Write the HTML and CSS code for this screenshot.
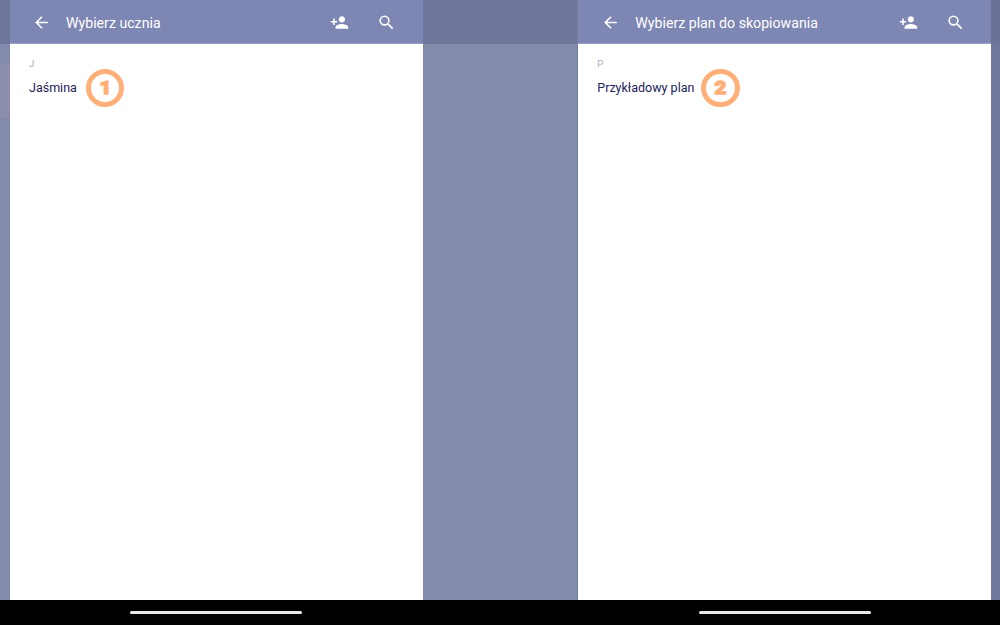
FILE: index.html
```html
<!DOCTYPE html>
<html lang="pl">
<head>
<meta charset="utf-8">
<title>Wybierz ucznia</title>
<link rel="stylesheet" href="styles.css">
</head>
<body>
<div class="screens">
  <div class="backdrop backdrop-left"><div class="backdrop-item"></div></div>
  <section class="panel">
    <header class="bar">
      <svg class="icon back" viewBox="0 0 24 24"><path d="M20 11H7.83l5.59-5.59L12 4l-8 8 8 8 1.41-1.41L7.83 13H20z"/></svg>
      <h1 class="title">Wybierz ucznia</h1>
      <svg class="icon add" viewBox="0 0 24 24"><path d="M15 12c2.21 0 4-1.79 4-4s-1.790-4-4-4-4 1.790-4 4 1.790 4 4 4zm-9-2V7H4v3H1v2h3v3h2v-3h3v-2zm9 4c-2.670 0-8 1.340-8 4v2h16v-2c0-2.660-5.330-4-8-4z"/></svg>
      <svg class="icon search" viewBox="0 0 24 24"><path d="M15.500 14h-.790l-.280-.270A6.470 6.470 0 0 0 16 9.500 6.500 6.500 0 1 0 9.500 16c1.610 0 3.090-.590 4.230-1.570l.270.280v.790l5 4.990L20.490 19zm-6 0a4.500 4.500 0 1 1 0-9 4.500 4.500 0 0 1 0 9z"/></svg>
    </header>
    <main class="list">
      <div class="letter">J</div>
      <div class="row"><span class="name name-short">Jaśmina</span><span class="step"><span class="digit digit-one">1</span></span></div>
    </main>
  </section>
  <div class="backdrop backdrop-middle"></div>
  <section class="panel panel-plans">
    <header class="bar">
      <svg class="icon back" viewBox="0 0 24 24"><path d="M20 11H7.83l5.59-5.59L12 4l-8 8 8 8 1.41-1.41L7.83 13H20z"/></svg>
      <h1 class="title">Wybierz plan do skopiowania</h1>
      <svg class="icon add" viewBox="0 0 24 24"><path d="M15 12c2.21 0 4-1.79 4-4s-1.790-4-4-4-4 1.790-4 4 1.790 4 4 4zm-9-2V7H4v3H1v2h3v3h2v-3h3v-2zm9 4c-2.670 0-8 1.340-8 4v2h16v-2c0-2.660-5.330-4-8-4z"/></svg>
      <svg class="icon search" viewBox="0 0 24 24"><path d="M15.500 14h-.790l-.280-.270A6.470 6.470 0 0 0 16 9.500 6.500 6.500 0 1 0 9.500 16c1.610 0 3.090-.590 4.230-1.570l.270.280v.790l5 4.990L20.490 19zm-6 0a4.500 4.500 0 1 1 0-9 4.500 4.500 0 0 1 0 9z"/></svg>
    </header>
    <main class="list">
      <div class="letter">P</div>
      <div class="row"><span class="name name-long">Przykładowy plan</span><span class="step"><span class="digit">2</span></span></div>
    </main>
  </section>
  <div class="backdrop backdrop-right"></div>
</div>
<footer class="navigation"><span class="handle"></span><span class="handle"></span></footer>
</body>
</html>
```
FILE: styles.css
```css
* { box-sizing: border-box; }
body {
  margin: 0;
  width: 1000px;
  height: 625px;
  overflow: hidden;
  display: flex;
  flex-direction: column;
  background: #000;
  font-family: Roboto, sans-serif;
}
.screens {
  display: grid;
  grid-template-columns: 10px 412.7px 155.6px 412.4px 9.3px;
  height: 600.3px;
  flex: none;
}
.backdrop {
  background: linear-gradient(#6f769c 44px, #848aac 44px);
}
.backdrop-left { padding-top: 63px; }
.backdrop-item { height: 55px; background: #8b8fad; }
.backdrop-middle { border-right: 1px solid #757ca4; }
.backdrop-right { background: linear-gradient(#6b7296 44px, #70779c 44px); }
.panel { background: #fff; min-width: 0; }
.bar {
  display: flex;
  align-items: center;
  height: 44px;
  padding: 0 27px 0 21.500px;
  border-bottom: 1px solid #9aa1c4;
  background: #7e86b3;
  color: #fff;
}
.icon { width: 19px; height: 19px; flex: none; margin-top: 1px; fill: #fff; }
.panel-plans .bar { padding: 0 26px 0 22.500px; }
.title {
  flex: 1;
  margin: 2px 0 0 15.500px;
  font-size: 14.150px;
  line-height: 20px;
  font-weight: 400;
  white-space: nowrap;
}
.add { margin-right: 27.500px; }
.list { padding: 14px 0 0 19px; }
.letter { font-size: 9.500px; line-height: 12px; color: #a5adc8; }
.row { display: flex; align-items: center; height: 36px; }
.name {
  font-size: 12.500px;
  line-height: 18px;
  color: #1b2358;
  white-space: nowrap;
}
.name-short { width: 56.500px; }
.name-long { width: 104.200px; }
.step {
  display: flex;
  align-items: center;
  justify-content: center;
  width: 38.500px;
  height: 38.500px;
  border: 5px solid #ffb078;
  border-radius: 50%;
  color: #ffb078;
}
.digit {
  font-size: 18.500px;
  line-height: 20px;
  font-weight: 900;
  -webkit-text-stroke: 1.400px #ffb078;
  transform: scaleX(1.1);
}
.digit-one { margin-left: 1px; }
.navigation {
  display: grid;
  grid-template-columns: 172px 172px;
  column-gap: 397px;
  padding: 10.500px 0 0 130px;
}
.handle { height: 3.400px; border-radius: 2px; background: #e8e8e8; }
```
